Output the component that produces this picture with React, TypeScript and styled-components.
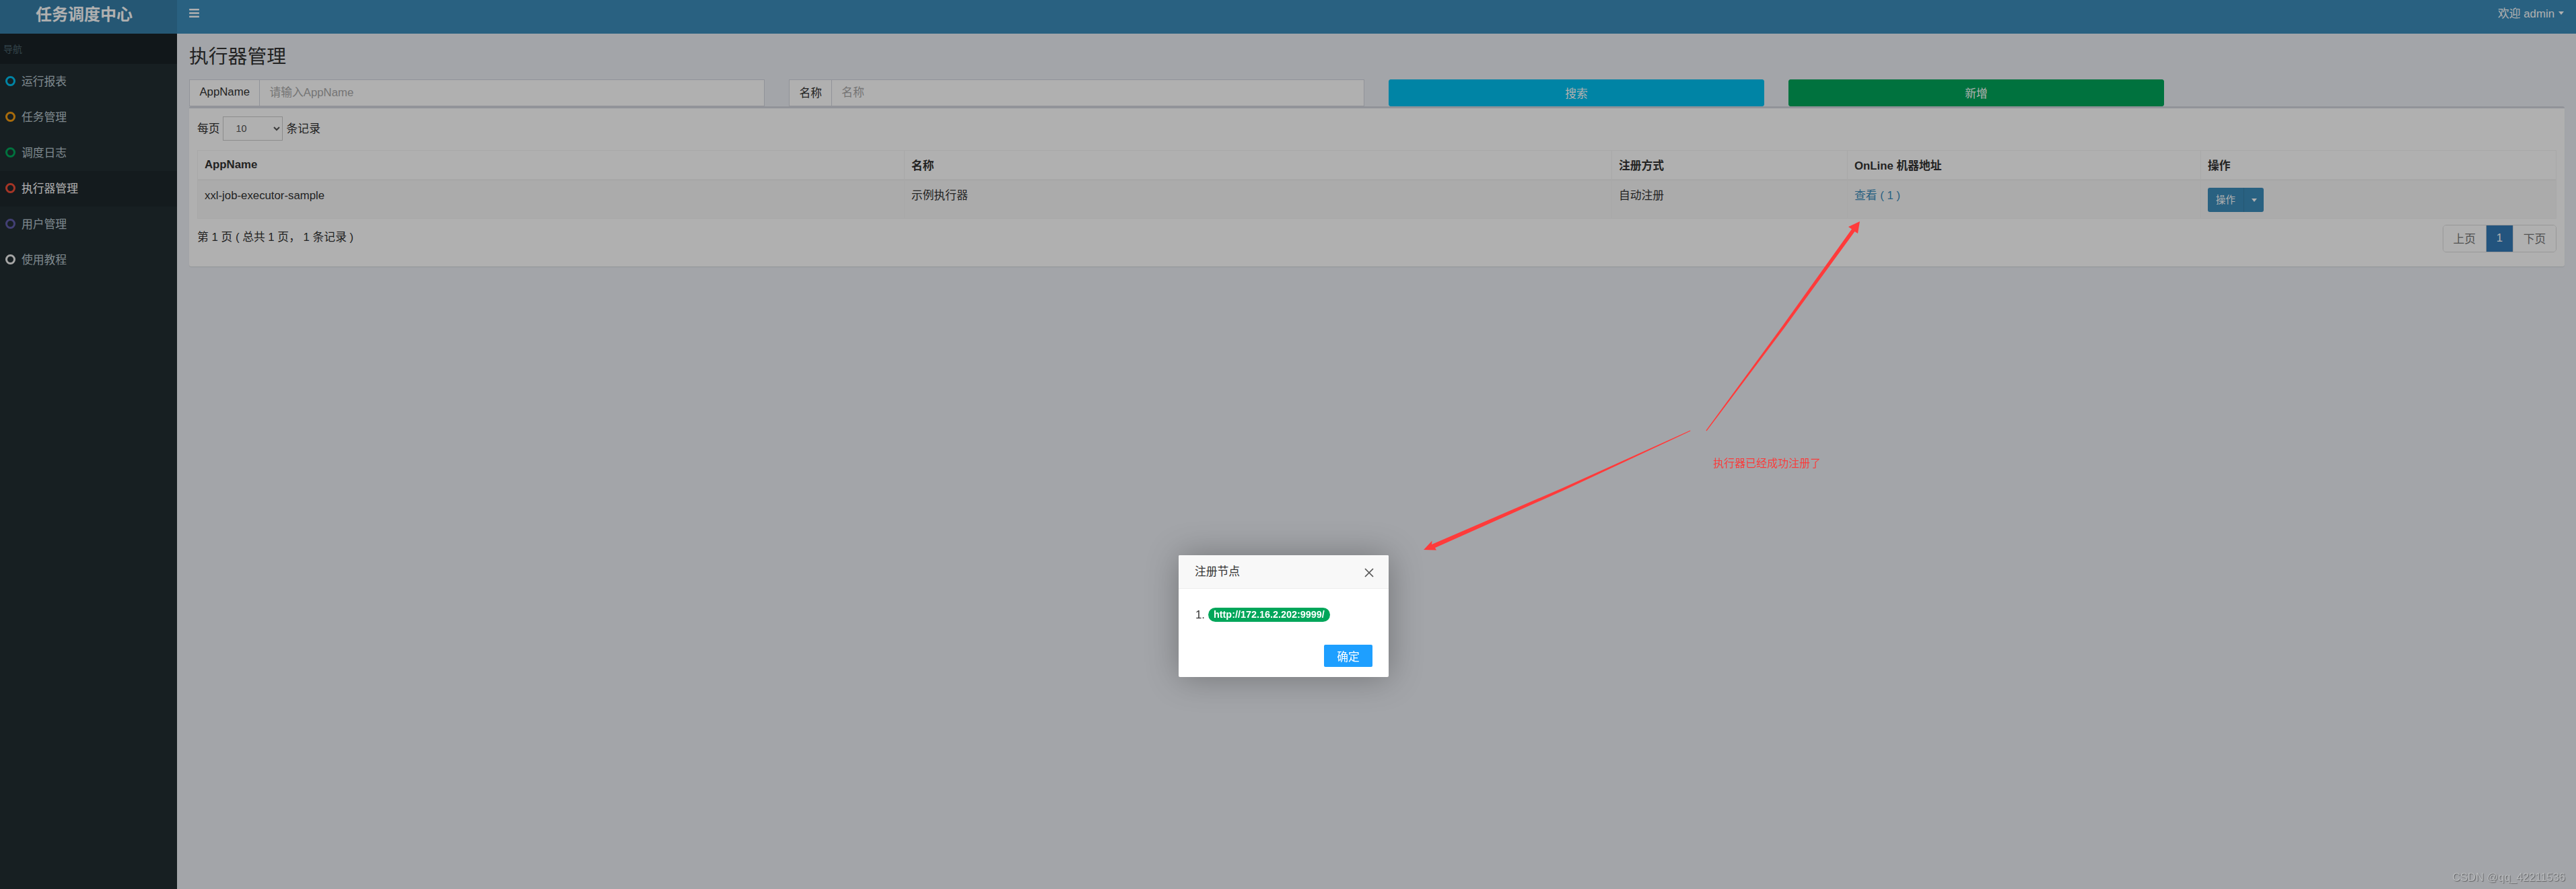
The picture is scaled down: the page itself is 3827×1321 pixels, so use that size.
import styled, { createGlobalStyle } from "styled-components";
import { FaBars } from "react-icons/fa";

const GlobalStyle = createGlobalStyle`
  html, body {
    margin: 0;
    padding: 0;
    width: 3827px;
    height: 1321px;
    overflow: hidden;
    background: #ecf0f5;
    color: #333;
    font-family: "Liberation Sans", "Noto Sans CJK SC", sans-serif;
    font-size: 16.8px;
  }
  * {
    box-sizing: border-box;
  }
`;

const menu = [
  { label: "运行报表", color: "#00c0ef" },
  { label: "任务管理", color: "#f39c12" },
  { label: "调度日志", color: "#00a65a" },
  { label: "执行器管理", color: "#f04e38", active: true },
  { label: "用户管理", color: "#605ca8" },
  { label: "使用教程", color: "#f0f0f0" },
];

const columns = [
  { label: "AppName", width: 1050 },
  { label: "名称", width: 1051 },
  { label: "注册方式", width: 350 },
  { label: "OnLine 机器地址", width: 525 },
  { label: "操作", width: 528 },
];

export default function App() {
  return (
    <>
      <GlobalStyle />
      <Page>
        <Header>
          <Logo>任务调度中心</Logo>
          <Navbar>
            <FaBars size={17} />
            <UserMenu>
              欢迎 admin
              <Caret />
            </UserMenu>
          </Navbar>
        </Header>
        <Body>
          <Sidebar>
            <NavHeader>导航</NavHeader>
            {menu.map((item) => (
              <NavItem key={item.label} $active={item.active}>
                <NavDot $color={item.color} />
                {item.label}
              </NavItem>
            ))}
          </Sidebar>
          <Content>
            <Title>执行器管理</Title>
            <FilterRow>
              <InputGroup>
                <InputLabel>AppName</InputLabel>
                <TextInput placeholder="请输入AppName" />
              </InputGroup>
              <InputGroup>
                <InputLabel>名称</InputLabel>
                <TextInput placeholder="名称" />
              </InputGroup>
              <BlockButton $color="#00c0ef">搜索</BlockButton>
              <BlockButton $color="#00a65a">新增</BlockButton>
            </FilterRow>
            <Box>
              <LengthRow>
                <LengthText>每页</LengthText>
                <PageSize defaultValue="10">
                  <option>10</option>
                  <option>25</option>
                  <option>50</option>
                  <option>100</option>
                </PageSize>
                <LengthText>条记录</LengthText>
              </LengthRow>
              <Table>
                <colgroup>
                  {columns.map((col) => (
                    <col key={col.label} width={col.width} />
                  ))}
                </colgroup>
                <thead>
                  <tr>
                    {columns.map((col) => (
                      <Th key={col.label}>{col.label}</Th>
                    ))}
                  </tr>
                </thead>
                <tbody>
                  <Row>
                    <Td>xxl-job-executor-sample</Td>
                    <Td>示例执行器</Td>
                    <Td>自动注册</Td>
                    <Td>
                      <Link>查看 ( 1 )</Link>
                    </Td>
                    <Td>
                      <SplitButton>
                        <SplitMain>操作</SplitMain>
                        <SplitToggle>
                          <Caret />
                        </SplitToggle>
                      </SplitButton>
                    </Td>
                  </Row>
                </tbody>
              </Table>
              <TableFooter>
                <PageInfo>第 1 页 ( 总共 1 页， 1 条记录 )</PageInfo>
                <Pagination>
                  <PageCell>上页</PageCell>
                  <PageCell $active>1</PageCell>
                  <PageCell>下页</PageCell>
                </Pagination>
              </TableFooter>
            </Box>
          </Content>
        </Body>
      </Page>

      <Shade />

      <Annotations viewBox="0 0 3827 1321">
        <polygon points="2535.5,640.5 2650.6,487.7 2755.5,344 2760,347 2763,329 2746,337 2751,340.5 2647.4,485.3 2534.5,639.5" />
        <polygon points="2511.5,640.5 2322.8,728.8 2132,814 2134,817.5 2115,817 2127.5,803.5 2127,809 2321.2,725.2 2511,639.5" />
      </Annotations>
      <AnnotationText>执行器已经成功注册了</AnnotationText>

      <Modal>
        <ModalHeader>
          注册节点
          <CloseIcon viewBox="0 0 14 14">
            <path d="M1 1 L13 13 M13 1 L1 13" />
          </CloseIcon>
        </ModalHeader>
        <ModalBody>
          1.
          <Pill>http://172.16.2.202:9999/</Pill>
        </ModalBody>
        <ModalFooter>
          <ConfirmButton>确定</ConfirmButton>
        </ModalFooter>
      </Modal>

      <Watermark>CSDN @qq_42211536</Watermark>
    </>
  );
}

const Page = styled.div`
  width: 3827px;
  height: 1321px;
  display: flex;
  flex-direction: column;
`;

const Header = styled.header`
  height: 50px;
  display: flex;
  flex-shrink: 0;
  color: #fff;
`;

const Logo = styled.div`
  width: 263px;
  height: 50px;
  padding: 0 13px 12px 0;
  display: flex;
  align-items: center;
  justify-content: center;
  background: #367fa9;
  font-size: 24px;
  font-weight: 700;
`;

const Navbar = styled.nav`
  flex: 1;
  padding: 0 18px 12px 17px;
  display: flex;
  align-items: center;
  justify-content: space-between;
  background: #3c8dbc;
`;

const UserMenu = styled.div`
  display: flex;
  align-items: center;
  gap: 6px;
`;

const Caret = styled.span`
  width: 0;
  height: 0;
  border-top: 5px solid #fff;
  border-left: 4px solid transparent;
  border-right: 4px solid transparent;
`;

const Body = styled.div`
  flex: 1;
  display: flex;
`;

const Sidebar = styled.aside`
  width: 263px;
  flex-shrink: 0;
  background: #222d32;
`;

const NavHeader = styled.div`
  height: 45px;
  padding: 0 0 2px 5px;
  display: flex;
  align-items: center;
  background: #1a2226;
  color: #4b646f;
  font-size: 14px;
`;

const NavItem = styled.div<{ $active?: boolean }>`
  height: 53px;
  padding: 0 0 3px 8px;
  display: flex;
  align-items: center;
  gap: 9px;
  background: ${({ $active }) => ($active ? "#1e282c" : "transparent")};
  color: ${({ $active }) => ($active ? "#fff" : "#b8c7ce")};
`;

const NavDot = styled.span<{ $color: string }>`
  width: 15px;
  height: 15px;
  border-radius: 50%;
  border: 3px solid ${({ $color }) => $color};
`;

const Content = styled.main`
  flex: 1;
  padding: 17px 19px 0 18px;
`;

const Title = styled.h1`
  margin: 0 0 17px;
  font-size: 28.8px;
  font-weight: 400;
  line-height: 34px;
`;

const FilterRow = styled.div`
  display: grid;
  grid-template-columns: 855px 855px 558px 558px;
  column-gap: 36px;
  height: 40px;
`;

const InputGroup = styled.div`
  display: flex;
  height: 40px;
  background: #fff;
  border: 1px solid #d2d6de;
`;

const InputLabel = styled.span`
  padding: 0 14.4px 2px;
  display: flex;
  align-items: center;
  border-right: 1px solid #d2d6de;
`;

const TextInput = styled.input`
  flex: 1;
  min-width: 0;
  padding: 0 14px 1px;
  border: 0;
  outline: 0;
  background: transparent;
  color: #555;
  font: inherit;
  &::placeholder {
    color: #aaa;
    opacity: 1;
  }
`;

const BlockButton = styled.button<{ $color: string }>`
  height: 40px;
  border: 1px solid ${({ $color }) => $color};
  border-radius: 3px;
  background: ${({ $color }) => $color};
  color: #fff;
  font: inherit;
`;

const Box = styled.section`
  padding: 12px 12px 21px;
  background: #fff;
  border-top: 3px solid #d2d6de;
  border-radius: 3px;
  box-shadow: 0 1px 1px rgba(0, 0, 0, 0.1);
`;

const LengthRow = styled.div`
  height: 36px;
  margin-bottom: 14px;
  display: flex;
  align-items: center;
`;

const LengthText = styled.span`
  padding-bottom: 3px;
`;

const PageSize = styled.select`
  width: 89px;
  height: 36px;
  margin: 0 6px 0 4px;
  padding-left: 15px;
  background: #fff;
  border: 1px solid #ccc;
  border-radius: 0;
  color: #555;
  font-family: inherit;
  font-size: 14.4px;
`;

const Table = styled.table`
  width: 3503px;
  table-layout: fixed;
  border-collapse: collapse;
  border: 1px solid #f4f4f4;
`;

const Th = styled.th`
  height: 44px;
  padding: 0 10px;
  text-align: left;
  font-weight: 700;
  border: 1px solid #f4f4f4;
  border-bottom-width: 3px;
`;

const Row = styled.tr`
  background: #f8f8f8;
`;

const Td = styled.td`
  height: 57px;
  padding: 9px 10px 0;
  vertical-align: top;
  line-height: 25px;
  border: 1px solid #f4f4f4;
`;

const Link = styled.span`
  color: #3c8dbc;
`;

const SplitButton = styled.div`
  width: 83px;
  height: 36px;
  margin-top: 1px;
  display: flex;
  border-radius: 3px;
  overflow: hidden;
  background: #3c8dbc;
  color: #fff;
  font-size: 14.4px;
`;

const SplitMain = styled.span`
  width: 54px;
  display: flex;
  align-items: center;
  justify-content: center;
  border-right: 1px solid #367fa9;
`;

const SplitToggle = styled.span`
  flex: 1;
  display: flex;
  align-items: center;
  justify-content: center;
`;

const TableFooter = styled.div`
  margin-top: 9px;
  display: flex;
  justify-content: space-between;
`;

const PageInfo = styled.div`
  padding-top: 7px;
  line-height: 24px;
`;

const Pagination = styled.div`
  display: flex;
  height: 41px;
  border: 1px solid #ddd;
  border-radius: 5px;
  overflow: hidden;
`;

const PageCell = styled.span<{ $active?: boolean }>`
  padding: 0 14.8px 2px;
  display: flex;
  align-items: center;
  border-right: 1px solid #ddd;
  background: ${({ $active }) => ($active ? "#337ab7" : "#fff")};
  color: ${({ $active }) => ($active ? "#fff" : "#777")};
  &:last-child {
    border-right: 0;
  }
`;

const Shade = styled.div`
  position: fixed;
  inset: 0;
  background: rgba(0, 0, 0, 0.31);
`;

const Annotations = styled.svg`
  position: fixed;
  left: 0;
  top: 0;
  width: 3827px;
  height: 1321px;
  fill: #ff3b3b;
`;

const AnnotationText = styled.div`
  position: fixed;
  left: 2545px;
  top: 677px;
  color: #f93c3c;
  font-size: 16px;
  line-height: 24px;
`;

const Modal = styled.div`
  position: fixed;
  left: 1751px;
  top: 825px;
  width: 312px;
  height: 181px;
  display: flex;
  flex-direction: column;
  background: #fff;
  border-radius: 2px;
  box-shadow: 1px 1px 50px rgba(0, 0, 0, 0.3);
`;

const ModalHeader = styled.div`
  height: 50px;
  padding: 0 22px 4px 24px;
  display: flex;
  align-items: center;
  justify-content: space-between;
  background: #f8f8f8;
  border-bottom: 1px solid #eee;
  border-radius: 2px 2px 0 0;
  color: #333;
  font-size: 16.8px;
`;

const CloseIcon = styled.svg`
  width: 14px;
  height: 14px;
  margin-top: 6px;
  stroke: #555;
  stroke-width: 1.7;
  fill: none;
`;

const ModalBody = styled.div`
  flex: 1;
  padding: 28px 24px 0 25px;
  display: flex;
  align-items: flex-start;
  gap: 5px;
  color: #333;
  font-size: 16.8px;
  line-height: 21px;
`;

const Pill = styled.span`
  height: 21px;
  padding: 0 8px;
  border-radius: 11px;
  background: #00a65a;
  color: #fff;
  font-size: 14.4px;
  font-weight: 700;
  line-height: 21px;
`;

const ModalFooter = styled.div`
  padding: 0 24px 15px;
  display: flex;
  justify-content: flex-end;
`;

const ConfirmButton = styled.button`
  width: 72px;
  height: 33px;
  padding: 0;
  border: 0;
  border-radius: 2px;
  background: #1e9fff;
  color: #fff;
  font: inherit;
`;

const Watermark = styled.div`
  position: fixed;
  right: 16px;
  bottom: 7px;
  color: #b9bbbd;
  font-size: 16.5px;
  line-height: 22px;
  text-shadow: 1px 1px 1px rgba(70, 70, 70, 0.7);
`;
